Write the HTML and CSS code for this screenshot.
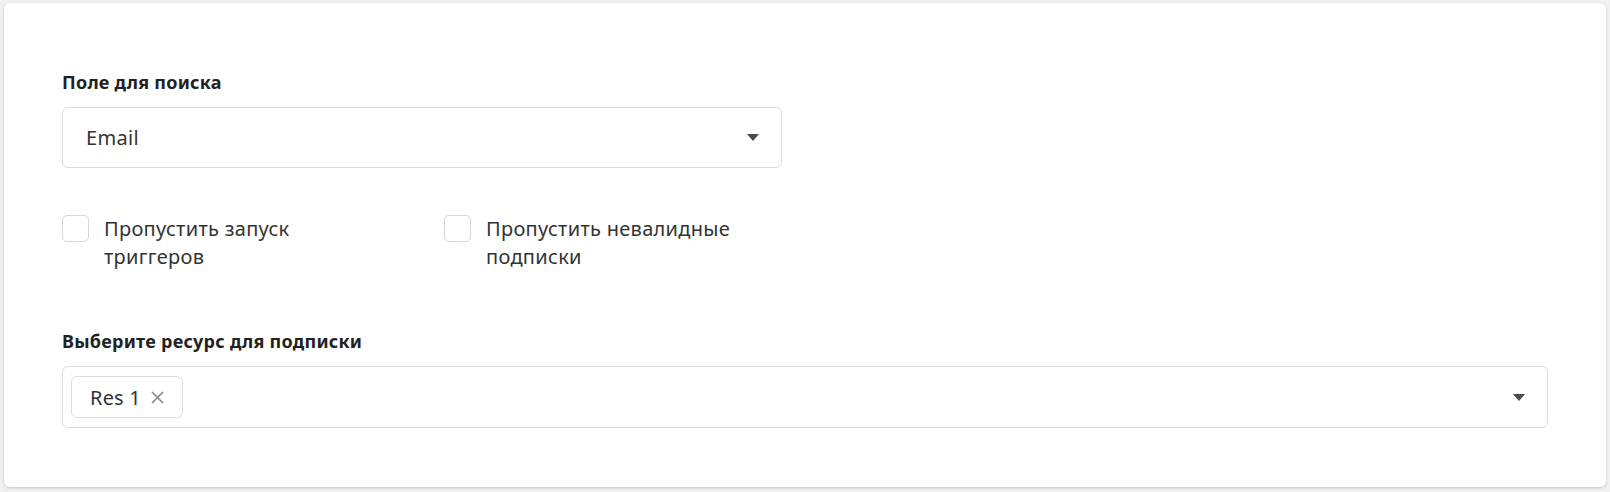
FILE: index.html
```html
<!DOCTYPE html>
<html>
  <head>
    <meta charset="utf-8" />
    <title>Импорт подписчиков</title>
    <link rel="stylesheet" href="styles.css">
  </head>
  <body>
    <div class="card">
      <div class="field">
        <div class="field-label">Поле для поиска</div>
        <div class="select select-short">
          <span class="select-value">Email</span>
          <span class="caret"></span>
        </div>
      </div>

      <div class="checks">
        <label class="check">
          <span class="check-box"></span>
          <span class="check-text">Пропустить запуск триггеров</span>
        </label>
        <label class="check">
          <span class="check-box"></span>
          <span class="check-text">Пропустить невалидные подписки</span>
        </label>
      </div>

      <div class="field">
        <div class="field-label">Выберите ресурс для подписки</div>
        <div class="select select-multi">
          <span class="chip">Res 1
            <svg class="chip-close" width="15" height="15" viewBox="0 0 15 15">
              <path d="M2 2 L13 13 M13 2 L2 13" stroke="#8a8a8a" stroke-width="1.7" fill="none"/>
            </svg>
          </span>
          <span class="caret"></span>
        </div>
      </div>
    </div>
  </body>
</html>
```

FILE: styles.css
```css
html {
  margin: 0px;
  padding: 0px;
}
body {
  font-family: 'Noto Sans', 'Open Sans', sans-serif;
  margin: 0px;
  padding: 3px 4px;
  color: #333;
  background-color: #f0f0f0;
}
.card {
  background-color: #fff;
  border-radius: 6px;
  box-shadow: 0 1px 3px rgba(0, 0, 0, 0.18);
  height: 484px;
  box-sizing: border-box;
  padding: 67px 58px 58px 58px;
}
.field-label {
  font-size: 18px;
  font-weight: 700;
  letter-spacing: 0.25px;
  color: #222;
  line-height: 24px;
  margin-bottom: 13px;
}
.select {
  display: flex;
  align-items: center;
  border: 1px solid #dcdcdc;
  border-radius: 6px;
  box-sizing: border-box;
  height: 61px;
}
.select-short {
  width: 720px;
  padding: 0 22px 0 23px;
}
.select-value {
  flex: 1;
  font-size: 20px;
  letter-spacing: 0.3px;
  color: #333;
}
.caret {
  width: 0;
  height: 0;
  border-left: 6px solid transparent;
  border-right: 6px solid transparent;
  border-top: 7px solid #4a4a4a;
}
.select-multi {
  height: 62px;
  padding: 0 22px 0 8px;
}
.select-multi .caret {
  margin-left: auto;
}
.chip {
  display: flex;
  align-items: center;
  gap: 9px;
  height: 42px;
  box-sizing: border-box;
  border: 1px solid #dcdcdc;
  border-radius: 6px;
  padding: 0 17px 0 18px;
  font-size: 20px;
  letter-spacing: 0.2px;
  color: #333;
}
.checks {
  display: flex;
  gap: 52px;
  margin: 47px 0 58px 0;
}
.check {
  display: flex;
  width: 330px;
  gap: 15px;
}
.check-box {
  flex: none;
  width: 27px;
  height: 27px;
  box-sizing: border-box;
  border: 1px solid #d6d6d6;
  border-radius: 5px;
}
.check-text {
  width: 268px;
  font-size: 20px;
  letter-spacing: 0.3px;
  line-height: 28px;
}
```
